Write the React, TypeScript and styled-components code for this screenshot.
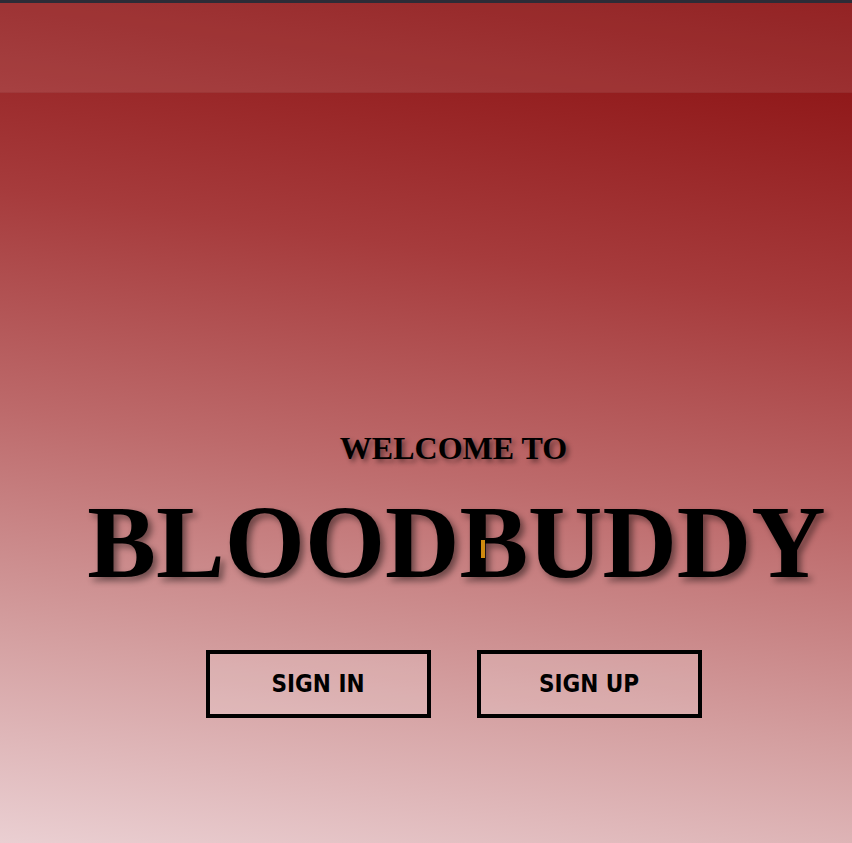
import React from "react";
import styled, { createGlobalStyle } from "styled-components";

const Global = createGlobalStyle`
  html, body { margin: 0; padding: 0; height: 100%; }
  body { font-family: "Liberation Serif", serif; }
  #root { min-height: 100%; }
`;

const Page = styled.div`
  min-height: 843px;
  display: flex;
  flex-direction: column;
  background: linear-gradient(188deg, #870a0b 0%, #a63b3c 32%, #bd6a6b 55%, #d49fa0 78%, #eacfd2 100%);
`;

const TopStrip = styled.div`
  height: 3px;
  background: #2d2c37;
`;

const Header = styled.header`
  height: 90px;
  background: rgba(255, 255, 255, 0.1);
  border-bottom: 1px solid rgba(120, 20, 20, 0.15);
  box-sizing: border-box;
`;

const Hero = styled.main`
  flex: 1;
  display: flex;
  flex-direction: column;
  align-items: center;
  padding: 337px 0 0 55px;
`;

const Welcome = styled.h2`
  margin: 0;
  font-family: "Liberation Serif", "Times New Roman", serif;
  font-weight: 700;
  font-size: 32px;
  line-height: 36px;
  color: #000;
  text-shadow: 3px 3px 5px rgba(0, 0, 0, 0.45);
`;

const Brand = styled.h1`
  position: relative;
  margin: 21px 0 0;
  padding-left: 6px;
  font-family: "Liberation Serif", "Times New Roman", serif;
  font-weight: 700;
  font-size: 103px;
  line-height: 110px;
  color: #000;
  text-shadow: 4px 4px 6px rgba(0, 0, 0, 0.45);
`;

const Caret = styled.span`
  position: absolute;
  left: 400px;
  top: 53px;
  width: 4px;
  height: 18px;
  background: #d08a10;
`;

const Actions = styled.div`
  display: flex;
  gap: 46px;
  margin-top: 53px;
`;

const Button = styled.button`
  width: 225px;
  height: 68px;
  box-sizing: border-box;
  border: 4px solid #000;
  background: rgba(255, 255, 255, 0.16);
  font-family: "DejaVu Sans Condensed", "DejaVu Sans", Verdana, sans-serif;
  font-stretch: condensed;
  font-weight: 700;
  font-size: 24px;
  color: #000;
  cursor: pointer;
`;

export default function App() {
  return (
    <>
      <Global />
      <Page>
        <TopStrip />
        <Header />
        <Hero>
          <Welcome>WELCOME TO</Welcome>
          <Brand>
            BLOODBUDDY
            <Caret />
          </Brand>
          <Actions>
            <Button>SIGN IN</Button>
            <Button>SIGN UP</Button>
          </Actions>
        </Hero>
      </Page>
    </>
  );
}
